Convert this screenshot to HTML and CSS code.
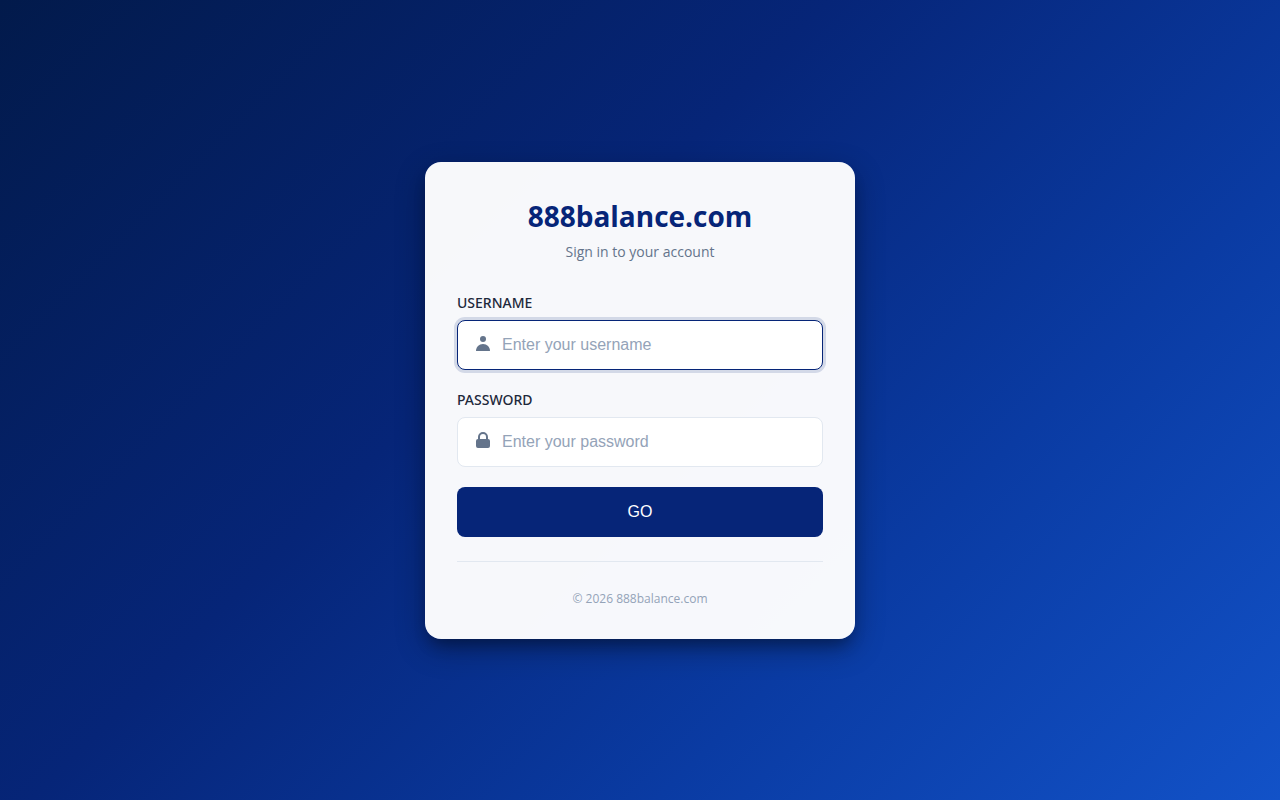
FILE: index.html
```html
<!DOCTYPE html>
<html lang="en">
<head>
    <meta charset="UTF-8">
    <meta name="viewport" content="width=device-width, initial-scale=1.0">
    <title>888balance.com</title>
    <link rel="stylesheet" href="styles.css">
</head>
<body>
    <main class="login-card">
        <header class="login-header">
            <h1>888balance.com</h1>
            <p>Sign in to your account</p>
        </header>

        <form class="login-form">
            <div class="form-group">
                <label for="username">Username</label>
                <div class="input-wrapper">
                    <svg class="input-icon" viewBox="0 0 16 16" aria-hidden="true">
                        <circle cx="8" cy="4" r="3"/>
                        <path d="M1 16c0-4 3-7 7-7s7 3 7 7z"/>
                    </svg>
                    <input type="text" id="username" name="username" placeholder="Enter your username" autofocus>
                </div>
            </div>
            <div class="form-group">
                <label for="password">Password</label>
                <div class="input-wrapper">
                    <svg class="input-icon" viewBox="0 0 16 16" aria-hidden="true">
                        <path d="M3 7V5a5 5 0 0 1 10 0v2a2 2 0 0 1 2 2v5a2 2 0 0 1-2 2H3a2 2 0 0 1-2-2V9a2 2 0 0 1 2-2zm2 0h6V5a3 3 0 0 0-6 0z"/>
                    </svg>
                    <input type="password" id="password" name="password" placeholder="Enter your password">
                </div>
            </div>
            <button type="submit">GO</button>
        </form>

        <footer class="login-footer">
            <p>&copy; 2026 888balance.com</p>
        </footer>
    </main>
</body>
</html>
```
FILE: styles.css
```css
* {
    margin: 0;
    padding: 0;
    box-sizing: border-box;
}
body {
    font-family: "Open Sans", "Noto Sans", sans-serif;
    background: linear-gradient(135deg, #021a4b 0%, #062578 40%, #0a3ba3 70%, #1252c8 100%);
    min-height: 100vh;
    display: flex;
    justify-content: center;
    align-items: center;
    padding: 20px;
}
.login-card {
    width: 100%;
    max-width: 430px;
    padding: 32px;
    background: rgba(255, 255, 255, 0.97);
    border-radius: 16px;
    box-shadow: 0 10px 30px rgba(0, 0, 0, 0.3), 0 10px 15px -5px rgba(0, 0, 0, 0.3);
}
.login-header {
    text-align: center;
    margin-bottom: 31px;
}
.login-header h1 {
    color: #062578;
    font-size: 28px;
    line-height: 44px;
    font-weight: 700;
    margin-bottom: 4px;
}
.login-header p {
    color: #64748b;
    font-size: 14px;
    line-height: 20px;
}
.form-group {
    margin-bottom: 20px;
}
.form-group label {
    display: block;
    color: #1e293b;
    font-family: "Noto Sans", sans-serif;
    font-size: 14px;
    line-height: 19px;
    font-weight: 500;
    text-transform: uppercase;
    margin-bottom: 8px;
}
.input-wrapper {
    position: relative;
}
.input-icon {
    position: absolute;
    left: 18px;
    top: 15px;
    width: 16px;
    height: 16px;
    fill: #64748b;
}
.input-wrapper input {
    display: block;
    width: 100%;
    height: 50px;
    padding: 0 16px 0 44px;
    border: 1px solid #e2e8f0;
    border-radius: 8px;
    background: #fff;
    color: #1e293b;
    font-family: "Liberation Sans", Arial, sans-serif;
    font-size: 16px;
    outline: none;
}
.input-wrapper input::placeholder {
    color: #94a3b8;
}
.input-wrapper input:focus {
    border-color: #062578;
    box-shadow: 0 0 0 3px rgba(6, 37, 120, 0.15);
}
.login-form button {
    display: block;
    width: 100%;
    height: 50px;
    border: none;
    border-radius: 8px;
    background: #062578;
    color: #fff;
    font-family: "Liberation Sans", Arial, sans-serif;
    font-size: 16px;
    cursor: pointer;
}
.login-footer {
    margin-top: 24px;
    padding-top: 28px;
    border-top: 1px solid #e2e8f0;
    text-align: center;
}
.login-footer p {
    color: #94a3b8;
    font-size: 12px;
    line-height: 17px;
}
```
